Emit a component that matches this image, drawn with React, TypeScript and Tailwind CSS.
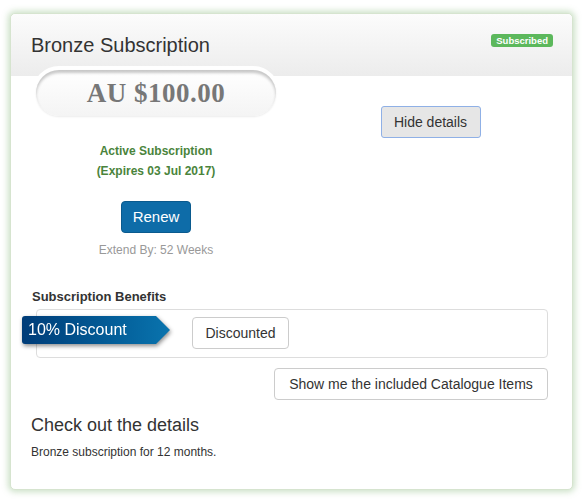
export default function App() {
    const sans = { fontFamily: '"Liberation Sans", Arial, sans-serif' };

    return (
        <div className="w-[582px] h-[503px] bg-white pt-[13px] pl-[10px]" style={sans}>
            {/* Card */}
            <div className="w-[563px] h-[477px] bg-white rounded-[5px] border border-[#d6e4cf] shadow-[0_0_6px_2px_rgba(110,170,95,0.35)] text-[#333]">
                {/* Header */}
                <div className="h-[62px] rounded-t-[5px] bg-gradient-to-b from-[#fcfcfc] to-[#ececec] flex items-start justify-between pl-[20px] pr-[19px]">
                    <h1 className="text-[20px] leading-[28px] pt-[17px]">Bronze Subscription</h1>
                    <span className="mt-[20px] bg-[#5cb85c] text-white text-[9.5px] font-bold leading-[13px] px-[5px] rounded-[3px]">
                        Subscribed
                    </span>
                </div>

                {/* Body */}
                <div className="px-[20px]">
                    <div className="grid grid-cols-[250px_1fr]">
                        {/* Left column */}
                        <div className="flex flex-col items-center -mt-[10px]">
                            <div className="bg-white rounded-full p-[4px] w-[248px]">
                                <div className="h-[46px] rounded-full bg-gradient-to-b from-white to-[#f4f4f4] shadow-[inset_0_3px_3px_rgba(0,0,0,0.22),0_1px_2px_rgba(0,0,0,0.08)] flex items-center justify-center">
                                    <span
                                        className="text-[27px] font-bold text-[#777] leading-none tracking-[0.5px]"
                                        style={{ fontFamily: '"Liberation Serif", "DejaVu Serif", serif' }}
                                    >
                                        AU $100.00
                                    </span>
                                </div>
                            </div>
                            <div className="mt-[21px] text-center text-[12px] font-bold leading-[20px] text-[#4a843c]">
                                <div>Active Subscription</div>
                                <div>(Expires 03 Jul 2017)</div>
                            </div>
                            <button className="mt-[20px] w-[70px] h-[32px] rounded-[4px] bg-[#0e6ca8] border border-[#0a5a8e] text-white text-[15px]">
                                Renew
                            </button>
                            <div className="mt-[9px] text-[12px] leading-[17px] text-[#999]">Extend By: 52 Weeks</div>
                        </div>

                        {/* Right column */}
                        <div className="flex justify-center pl-[28px] pt-[30px]">
                            <button className="w-[100px] h-[32px] rounded-[3px] bg-[#e6e6e6] border border-[#8fb0e6] text-[14px] text-[#333] self-start">
                                Hide details
                            </button>
                        </div>
                    </div>

                    {/* Benefits */}
                    <h3 className="mt-[29px] text-[13px] font-bold leading-[18px] text-[#333] pl-[1px]">Subscription Benefits</h3>
                    <div className="relative mt-[3px] ml-[5px] mr-[4px] h-[49px] border border-[#ddd] rounded-[4px]">
                        <div className="absolute -left-[15px] top-[6px] drop-shadow-[1px_2px_2px_rgba(0,0,0,0.45)]">
                            <div
                                className="w-[148px] h-[28px] rounded-l-[3px] bg-gradient-to-r from-[#003c78] to-[#0a74ae] text-white text-[16px] leading-[28px] pl-[6px]"
                                style={{ clipPath: "polygon(0 0, 134px 0, 100% 50%, 134px 100%, 0 100%)" }}
                            >
                                10% Discount
                            </div>
                        </div>
                        <button className="absolute left-[155px] top-[7px] w-[97px] h-[32px] rounded-[4px] bg-white border border-[#ccc] text-[14px] text-[#333]">
                            Discounted
                        </button>
                    </div>

                    <div className="flex justify-end mr-[4px] mt-[10px]">
                        <button className="w-[274px] h-[32px] rounded-[4px] bg-white border border-[#ccc] text-[14px] text-[#333]">
                            Show me the included Catalogue Items
                        </button>
                    </div>

                    <h2 className="mt-[13px] text-[18px] leading-[24px] text-[#333]">Check out the details</h2>
                    <p className="mt-[7px] text-[12px] leading-[17px] text-[#333]">Bronze subscription for 12 months.</p>
                </div>
            </div>
        </div>
    );
}
